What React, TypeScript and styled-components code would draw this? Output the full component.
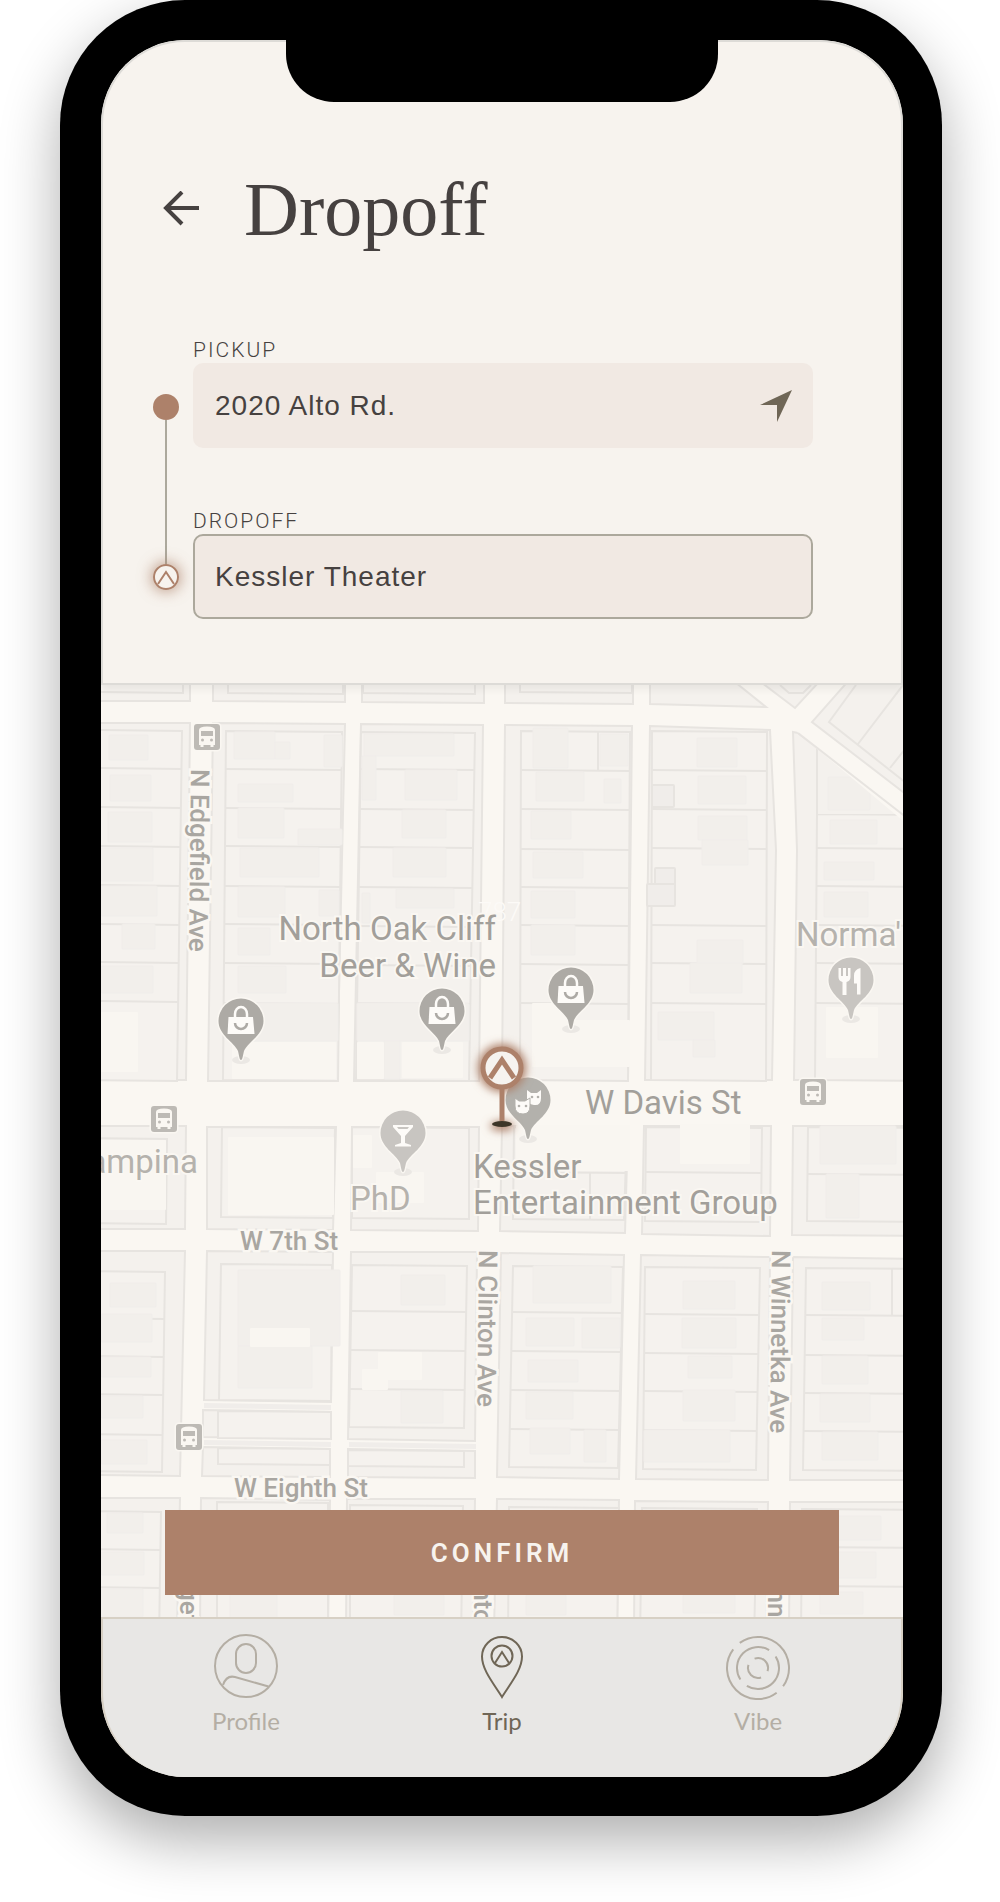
import React from "react";
import styled, { createGlobalStyle } from "styled-components";

const color = {
  clay: "#ad816a",
  ink: "#464140",
  bark: "#6f6656",
  stone: "#aca89c",
  muted: "#b4aea4",
  paper: "#f7f3ee",
  field: "#f1e9e3",
  road: "#faf7f2",
  block: "#f4f1ed",
  line: "#e7e4e0",
  building: "#f2efeb",
};

const GlobalStyle = createGlobalStyle`
  * { box-sizing: border-box; }
  body {
    margin: 0;
    background: #ffffff;
    color: ${color.ink};
    font-family: "Liberation Sans", Arial, sans-serif;
  }
  button, input { font: inherit; color: inherit; }
`;

const Stage = styled.div`
  padding: 0 58px 86px 60px;
  overflow: hidden;
`;

const Phone = styled.main`
  padding: 40px 39px 39px 41px;
  border-radius: 125px;
  background: #000000;
  box-shadow: 0 24px 60px rgba(0, 0, 0, 0.32);
`;

const Screen = styled.div`
  position: relative;
  display: flex;
  flex-direction: column;
  overflow: hidden;
  border-radius: 84px;
  background: ${color.road};
`;

const Notch = styled.div`
  position: absolute;
  top: 0;
  left: 50%;
  z-index: 3;
  width: 432px;
  height: 62px;
  margin-left: -216px;
  border-radius: 0 0 48px 48px;
  background: #000000;
`;

const Header = styled.header`
  position: relative;
  z-index: 2;
  padding: 125px 88px 64px 50px;
  border: 2px solid #dddbd7;
  border-radius: 84px 84px 0 0;
  background: ${color.paper};
  box-shadow: 0 4px 8px rgba(0, 0, 0, 0.06);
`;

const TitleRow = styled.div`
  display: flex;
  align-items: center;
  gap: 35px;
  margin-bottom: 86px;
`;

const BackButton = styled.button`
  display: flex;
  justify-content: center;
  width: 56px;
  padding: 10px;
  border: 0;
  background: none;
`;

const Title = styled.h1`
  margin: 0;
  font-family: "Liberation Serif", "Times New Roman", serif;
  font-size: 76px;
  font-weight: 400;
  line-height: 84px;
`;

const RouteForm = styled.form`
  display: grid;
  grid-template-columns: 26px 1fr;
  gap: 14px;
`;

const Rail = styled.div`
  display: flex;
  flex-direction: column;
  align-items: center;
  padding: 57px 0 29px;
`;

const Dot = styled.span`
  width: 26px;
  height: 26px;
  border-radius: 50%;
  background: ${color.clay};
`;

const RailLine = styled.span`
  flex: 1;
  width: 2px;
  background: ${color.stone};
`;

const RailEnd = styled.span`
  display: flex;
  border-radius: 50%;
  box-shadow: 0 0 14px 2px rgba(173, 129, 106, 0.7);
`;

const Fields = styled.div`
  display: flex;
  flex-direction: column;
  gap: 60px;
`;

const FieldLabel = styled.label`
  display: block;
  font-family: Roboto, sans-serif;
  font-size: 21px;
  font-weight: 300;
  line-height: 26px;
  letter-spacing: 2px;
`;

const FieldBox = styled.div<{ $active?: boolean }>`
  display: flex;
  align-items: center;
  height: 85px;
  padding: 0 19px 0 20px;
  border: 2px solid ${(p) => (p.$active ? color.stone : "transparent")};
  border-radius: 10px;
  background: ${color.field};
`;

const TextInput = styled.input`
  flex: 1;
  min-width: 0;
  padding: 0;
  border: 0;
  outline: 0;
  background: none;
  font-size: 28px;
  line-height: 36px;
  letter-spacing: 1px;
`;

const LocateButton = styled.button`
  display: flex;
  padding: 0;
  border: 0;
  background: none;
`;

const MapArea = styled.section`
  position: relative;
`;

const MapCanvas = styled.svg`
  display: block;
  width: 100%;
  height: auto;
  background: ${color.road};
`;

const PlaceText = styled.text<{ $soft?: boolean }>`
  font-family: Roboto, sans-serif;
  font-size: 33px;
  fill: ${(p) => (p.$soft ? "#b5b2ad" : "#a29f9a")};
  stroke: ${color.road};
  stroke-width: 4px;
  paint-order: stroke;
`;

const StreetText = styled.text`
  font-family: Roboto, sans-serif;
  font-size: 26px;
  font-weight: 500;
  fill: #a9a6a1;
  stroke: ${color.road};
  stroke-width: 5px;
  paint-order: stroke;
`;

const HouseNumber = styled.text`
  font-family: Roboto, sans-serif;
  font-size: 26px;
  font-weight: 300;
  fill: #fcfaf7;
`;

const ConfirmButton = styled.button`
  position: absolute;
  right: 64px;
  bottom: 22px;
  left: 64px;
  height: 85px;
  padding: 0;
  border: 0;
  background: ${color.clay};
  color: ${color.paper};
  font-family: Roboto, sans-serif;
  font-size: 26px;
  font-weight: 600;
  letter-spacing: 4px;
`;

const TabBar = styled.nav`
  display: grid;
  grid-template-columns: repeat(3, 1fr);
  padding: 15px 15px 41px;
  border: 2px solid #d7d0c4;
  border-bottom: 0;
  border-radius: 0 0 84px 84px;
  background: #e8e7e5;
`;

const Tab = styled.a<{ $current?: boolean }>`
  display: flex;
  flex-direction: column;
  align-items: center;
  gap: 8px;
  color: ${(p) => (p.$current ? color.bark : color.muted)};
  font-family: Lato, sans-serif;
  font-size: 24px;
  line-height: 30px;
  text-decoration: none;
`;

type Point = [number, number];

const pts = (list: Point[]) => list.map((p) => p.join(",")).join(" ");

// City blocks, clockwise from the top left corner of each.
const blocks: Point[][] = [
  [[90, 670], [190, 670], [190, 701], [90, 701]],
  [[213, 670], [345, 670], [345, 702], [213, 701]],
  [[362, 670], [484, 670], [484, 703], [362, 702]],
  [[505, 670], [633, 670], [633, 704], [505, 703]],
  [[650, 670], [720, 670], [766, 707], [650, 704]],
  [[745, 670], [830, 670], [795, 708]],
  [[858, 670], [920, 670], [920, 805], [812, 722]],
  [[90, 723], [190, 723], [186, 1080], [90, 1080]],
  [[213, 723], [345, 724], [337, 1081], [208, 1081]],
  [[361, 724], [483, 725], [479, 1081], [354, 1081]],
  [[505, 725], [632, 726], [628, 1080], [502, 1080]],
  [[650, 726], [770, 730], [776, 850], [772, 1080], [645, 1080]],
  [[793, 732], [798, 733], [920, 828], [920, 1080], [794, 1080], [797, 850]],
  [[90, 1126], [186, 1126], [185, 1229], [90, 1229]],
  [[207, 1127], [336, 1127], [333, 1230], [207, 1229]],
  [[352, 1127], [479, 1127], [478, 1231], [351, 1230]],
  [[502, 1126], [628, 1126], [625, 1233], [500, 1231]],
  [[644, 1126], [771, 1126], [770, 1236], [642, 1234]],
  [[793, 1126], [920, 1126], [920, 1236], [792, 1235]],
  [[90, 1251], [185, 1251], [180, 1476], [90, 1475]],
  [[207, 1251], [333, 1252], [331, 1402], [204, 1400]],
  [[203, 1410], [331, 1412], [330, 1439], [203, 1437]],
  [[203, 1447], [330, 1449], [330, 1477], [202, 1476]],
  [[351, 1252], [477, 1252], [475, 1441], [348, 1439]],
  [[348, 1449], [475, 1451], [475, 1478], [348, 1477]],
  [[501, 1253], [624, 1255], [619, 1479], [497, 1477]],
  [[641, 1255], [770, 1257], [768, 1480], [636, 1479]],
  [[793, 1257], [920, 1259], [920, 1480], [790, 1480]],
  [[90, 1498], [180, 1498], [177, 1630], [90, 1630]],
  [[201, 1498], [330, 1500], [328, 1630], [200, 1630]],
  [[347, 1499], [475, 1499], [473, 1630], [346, 1630]],
  [[497, 1499], [619, 1500], [617, 1630], [494, 1630]],
  [[635, 1501], [768, 1502], [766, 1630], [634, 1630]],
  [[790, 1502], [920, 1502], [920, 1630], [789, 1630]],
];

// Parcels: left/right at the top, left/right at the bottom, dividing heights.
type Parcel = [number, number, number, number, number[]];
const parcels: Parcel[] = [
  [90, 183, 90, 183, [660, 692]],
  [228, 343, 228, 343, [660, 693]],
  [363, 475, 363, 475, [660, 693]],
  [520, 632, 520, 632, [660, 692]],
  [90, 182, 90, 177, [730, 768, 807, 846, 885, 924, 962, 1001, 1080]],
  [226, 342, 223, 338, [731, 769, 808, 846, 886, 924, 963, 1003, 1080]],
  [361, 475, 356, 469, [732, 769, 809, 847, 887, 926, 965, 1003, 1080]],
  [521, 630, 520, 628, [731, 770, 809, 849, 887, 925, 964, 1003, 1080]],
  [652, 767, 651, 766, [731, 770, 809, 848, 925, 963, 1003, 1080]],
  [817, 920, 815, 920, [814, 848, 886, 925, 963, 1003, 1080]],
  [90, 167, 90, 166, [1138, 1223]],
  [222, 335, 221, 333, [1127, 1217]],
  [352, 469, 352, 469, [1127, 1218]],
  [514, 627, 513, 624, [1127, 1172, 1219]],
  [646, 762, 645, 761, [1127, 1172, 1221]],
  [808, 920, 807, 920, [1127, 1174, 1221]],
  [90, 165, 90, 162, [1271, 1318, 1356, 1394, 1434, 1471]],
  [221, 332, 219, 331, [1264, 1400]],
  [218, 331, 218, 331, [1411, 1438]],
  [218, 330, 218, 330, [1448, 1464]],
  [352, 467, 349, 464, [1265, 1311, 1350, 1389, 1427]],
  [348, 464, 348, 464, [1450, 1466]],
  [513, 623, 509, 618, [1266, 1312, 1351, 1390, 1429, 1467]],
  [645, 760, 643, 756, [1267, 1314, 1353, 1391, 1430, 1469]],
  [806, 920, 803, 920, [1268, 1315, 1355, 1393, 1431, 1470]],
  [90, 161, 90, 159, [1511, 1549, 1587, 1640]],
  [217, 328, 217, 328, [1502, 1640]],
  [350, 463, 350, 461, [1505, 1640]],
  [509, 619, 508, 617, [1507, 1640]],
  [642, 757, 640, 754, [1508, 1640]],
  [802, 920, 801, 920, [1509, 1547, 1586, 1640]],
];

type Box = [number, number, number, number];
const buildings: Box[] = [
  [109, 735, 39, 25], [110, 775, 41, 26], [108, 812, 44, 30], [101, 848, 52, 33],
  [101, 886, 56, 30], [122, 924, 33, 25], [101, 966, 52, 27],
  [234, 732, 41, 27], [275, 742, 15, 17], [324, 735, 18, 32], [238, 784, 55, 18],
  [238, 808, 46, 30], [298, 829, 44, 16], [240, 848, 79, 29], [238, 887, 47, 30],
  [319, 890, 20, 26], [238, 928, 32, 27], [238, 966, 48, 27],
  [364, 734, 90, 22], [362, 756, 14, 44], [405, 770, 52, 30], [402, 810, 44, 28],
  [393, 848, 53, 29], [396, 889, 58, 19], [362, 893, 8, 30],
  [533, 728, 35, 40], [600, 734, 28, 32], [536, 772, 48, 29], [604, 779, 17, 24],
  [531, 811, 40, 28], [533, 852, 50, 26], [531, 891, 44, 27], [531, 925, 44, 30],
  [697, 738, 40, 29], [698, 776, 48, 28], [698, 816, 49, 24], [702, 840, 46, 25],
  [697, 940, 46, 24], [690, 963, 52, 30], [658, 1012, 56, 28], [693, 1040, 22, 17],
  [828, 777, 42, 33], [830, 820, 47, 24], [824, 862, 50, 18], [824, 892, 44, 25],
  [230, 1003, 108, 38], [357, 1003, 112, 38], [384, 1041, 16, 38],
  [820, 1126, 76, 38], [826, 1174, 33, 44],
  [110, 1283, 46, 24], [101, 1314, 51, 28], [101, 1357, 50, 20], [101, 1396, 42, 22],
  [101, 1440, 46, 24], [238, 1270, 102, 76], [238, 1346, 74, 42],
  [401, 1275, 44, 30], [401, 1391, 42, 32], [533, 1266, 78, 37], [526, 1318, 48, 28],
  [582, 1318, 38, 30], [528, 1360, 50, 22], [526, 1392, 47, 27], [530, 1428, 40, 26],
  [584, 1430, 22, 32], [683, 1281, 52, 28], [682, 1318, 54, 30], [688, 1356, 44, 22],
  [683, 1390, 52, 31], [644, 1430, 86, 32], [822, 1282, 48, 28], [822, 1318, 42, 22],
  [822, 1356, 46, 28], [820, 1394, 50, 28], [822, 1432, 56, 28],
  [107, 1513, 36, 20], [101, 1552, 43, 23], [101, 1589, 42, 28], [230, 1595, 47, 30],
  [394, 1595, 50, 20], [526, 1595, 40, 20], [683, 1595, 52, 18], [838, 1516, 43, 24],
  [838, 1552, 38, 26], [820, 1592, 43, 22],
];

const sheds: Box[] = [[652, 785, 22, 22], [655, 868, 20, 18], [647, 884, 28, 22]];

const lots: Box[] = [
  [90, 1012, 48, 60], [232, 1042, 104, 37], [357, 1042, 27, 37], [402, 1042, 61, 36],
  [532, 1003, 34, 20], [532, 1020, 98, 47], [826, 1007, 52, 51], [90, 1140, 76, 70],
  [228, 1137, 106, 78], [353, 1135, 19, 33], [376, 1172, 48, 31], [516, 1125, 114, 46],
  [680, 1124, 70, 40], [378, 1352, 44, 28], [362, 1369, 26, 21], [250, 1328, 60, 19],
];

const ParcelShape = ({ parcel }: { parcel: Parcel }) => {
  const [leftTop, rightTop, leftEnd, rightEnd, rows] = parcel;
  const top = rows[0];
  const end = rows[rows.length - 1];
  const at = (a: number, b: number, y: number) => a + ((b - a) * (y - top)) / (end - top);
  return (
    <g>
      <polygon points={pts([[leftTop, top], [rightTop, top + 1], [rightEnd, end + 1], [leftEnd, end]])} />
      {rows.slice(1, -1).map((y) => (
        <line key={y} x1={at(leftTop, leftEnd, y)} x2={at(rightTop, rightEnd, y)} y1={y} y2={y + 1} />
      ))}
    </g>
  );
};

const Boxes = ({ list }: { list: Box[] }) => (
  <>
    {list.map(([x, y, w, h], i) => (
      <rect key={i} x={x} y={y} width={w} height={h} rx={1} />
    ))}
  </>
);

type PinKind = "shop" | "food" | "bar" | "theater";

// Teardrop marker whose origin is its tip.
const Pin = ({ x, y, kind, fill }: { x: number; y: number; kind: PinKind; fill: string }) => (
  <g transform={`translate(${x} ${y})`}>
    <ellipse rx="9" ry="4" fill="#ebe8e4" />
    <path
      d="M0 0C-1.500 0-2-5-3-9C-7-18-22.500-25-22.500-39A22.500 22.500 0 0 1 22.500-39C22.500-25 7-18 3-9C2-5 1.500 0 0 0Z"
      fill={fill}
      stroke={color.road}
      strokeWidth="3"
      paintOrder="stroke"
    />
    {kind === "shop" && (
      <g>
        <path d="M-12.500-43H12L13.500-26H-13.500Z" fill="#fdfbf8" />
        <path d="M-6-42V-46a6 7 0 0 1 12 0V-42" fill="none" stroke="#fdfbf8" strokeWidth="2.500" />
        <path d="M-6-37a6 6 0 0 0 12 0" fill="none" stroke={fill} strokeWidth="2.500" />
      </g>
    )}
    {kind === "food" && (
      <g fill="#fdfbf8">
        <path d="M-12.500-51h2.500v8h2v-8h3v8h2v-8h2.500v9q0 4-4 5v13h-4v-13q-4-1-4-5Z" />
        <path d="M9.500-51v26.500h-3.500v-11h-3v-8q0-6 6.500-7.500Z" />
      </g>
    )}
    {kind === "bar" && (
      <path d="M-10-47H10V-45L2-36V-29L8-27V-25.500H-8V-27L-2-29V-36L-10-45ZM-6-45L-4.500-43H4.500L6-45Z" fill="#fdfbf8" fillRule="evenodd" />
    )}
    {kind === "theater" && (
      <g>
        <path d="M-1-49L3-46H9L13-49V-41q0 8-7 7q-7-1-7-7Z" fill="#fdfbf8" />
        <path d="M-13-41L-9-38H-3L2-41V-33q0 8-7 8q-8 0-8-8Z" fill="#fdfbf8" stroke={fill} strokeWidth="1" />
        <g fill={fill}>
          <circle cx="-9" cy="-33" r="1.300" />
          <circle cx="-2" cy="-33" r="1.300" />
          <circle cx="4" cy="-42" r="1.300" />
          <circle cx="10" cy="-42" r="1.300" />
        </g>
      </g>
    )}
  </g>
);

const BusStop = ({ x, y }: { x: number; y: number }) => (
  <g transform={`translate(${x} ${y})`}>
    <rect width="26" height="26" rx="3" fill="#bdbab5" stroke={color.road} strokeWidth="3" paintOrder="stroke" />
    <path d="M5 6q0-3.500 8-3.500t8 3.500v15h-1.500v2h-3v-2h-7v2h-3v-2H5Z" fill={color.road} />
    <rect x="7" y="7" width="12" height="5" fill="#bdbab5" />
    <circle cx="8.500" cy="16" r="1.500" fill="#bdbab5" />
    <circle cx="17.500" cy="16" r="1.500" fill="#bdbab5" />
  </g>
);

const StreetMap = () => (
  <MapCanvas viewBox="101 685 802 932" role="img" aria-label="Map around the Kessler Theater">
    <defs>
      <filter id="glow" x="-60%" y="-60%" width="220%" height="220%">
        <feGaussianBlur stdDeviation="4" />
      </filter>
    </defs>
    <g fill={color.block} stroke={color.line} strokeWidth="2">
      {blocks.map((b, i) => (
        <polygon key={i} points={pts(b)} />
      ))}
    </g>
    <g fill="#f0edea">
      <path d="M204 1403L331 1405V1410L204 1408ZM204 1440L331 1442V1447L204 1445ZM349 1442L476 1444V1449L349 1447Z" />
    </g>
    <g fill="#f5f2ee" stroke={color.line} strokeWidth="2">
      {parcels.map((p, i) => (
        <ParcelShape key={i} parcel={p} />
      ))}
    </g>
    <g fill="none" stroke={color.line} strokeWidth="2">
      <path d="M780 685L789 693H803L811 685M856 685L829 722L920 794M903 685L858 744M890 768L920 730" />
      <path d="M590 1172V1219M598 731V770M892 1268V1315" />
    </g>
    <path d="M816 748L920 828V814H816Z" fill={color.block} />
    <path d="M817 815V748" stroke={color.line} strokeWidth="2" />
    <g fill={color.building} stroke="#f0edea" strokeWidth="1">
      <Boxes list={buildings} />
    </g>
    <g fill="#f0edea" stroke={color.line} strokeWidth="2">
      <Boxes list={sheds} />
    </g>
    <g fill="#f9f6f1">
      <Boxes list={lots} />
    </g>
    <path d="M793 720L815 732L920 812V835L798 733Z" fill={color.road} />
    <path d="M798 733L920 828" stroke={color.line} strokeWidth="2" />

    <BusStop x={194} y={724} />
    <BusStop x={151} y={1106} />
    <BusStop x={800} y={1079} />
    <BusStop x={176} y={1424} />

    <HouseNumber x="478" y="921">787</HouseNumber>

    <StreetText transform="translate(191 769) rotate(90.600)">N Edgefield Ave</StreetText>
    <StreetText transform="translate(479 1250) rotate(90.600)">N Clinton Ave</StreetText>
    <StreetText transform="translate(772 1250) rotate(90.600)">N Winnetka Ave</StreetText>
    <StreetText transform="translate(180 1532) rotate(90)">N Edgefield Ave</StreetText>
    <StreetText transform="translate(474 1531) rotate(90)">N Clinton Ave</StreetText>
    <StreetText transform="translate(768 1534) rotate(90)">N Winnetka Ave</StreetText>
    <StreetText x="240" y="1250">W 7th St</StreetText>
    <StreetText x="234" y="1497">W Eighth St</StreetText>

    <Pin x={241} y={1060} kind="shop" fill="#adaaa5" />
    <Pin x={442} y={1050} kind="shop" fill="#adaaa5" />
    <Pin x={571} y={1029} kind="shop" fill="#adaaa5" />
    <Pin x={851} y={1019} kind="food" fill="#c8c5c1" />
    <Pin x={403} y={1172} kind="bar" fill="#c8c5c1" />
    <Pin x={528} y={1139} kind="theater" fill="#b3b1ac" />

    <PlaceText x="496" y="940" textAnchor="end">North Oak Cliff</PlaceText>
    <PlaceText x="496" y="977" textAnchor="end">Beer &amp; Wine</PlaceText>
    <PlaceText x="796" y="946" $soft>Norma'</PlaceText>
    <PlaceText x="198" y="1173" textAnchor="end" $soft>ampina</PlaceText>
    <PlaceText x="350" y="1210" $soft>PhD</PlaceText>
    <PlaceText x="585" y="1114">W Davis St</PlaceText>
    <PlaceText x="473" y="1178">Kessler</PlaceText>
    <PlaceText x="473" y="1214">Entertainment Group</PlaceText>

    <g filter="url(#glow)" fill={color.clay}>
      <circle cx="502" cy="1068" r="24" />
      <ellipse cx="502" cy="1126" rx="12" ry="5" />
    </g>
    <ellipse cx="502" cy="1124" rx="10" ry="3" fill="#3d3628" />
    <path d="M502 1088V1121" stroke={color.clay} strokeWidth="5" />
    <circle cx="502" cy="1068" r="19" fill="#f6f3ef" stroke={color.clay} strokeWidth="5" />
    <path d="M490 1078L502 1060L514 1078" fill="none" stroke={color.clay} strokeWidth="5" />
  </MapCanvas>
);

const arc = (cx: number, cy: number, r: number, from: number, to: number) => {
  const at = (deg: number) => {
    const a = (deg * Math.PI) / 180;
    return `${cx + r * Math.cos(a)} ${cy + r * Math.sin(a)}`;
  };
  return `M${at(from)}A${r} ${r} 0 ${to - from > 180 ? 1 : 0} 1 ${at(to)}`;
};

const vibeArcs = [
  [31, -126, 36], [31, 53, 217],
  [21, 147, 302], [21, -33, 122],
  [10, -110, 18], [10, 72, 198],
].map(([r, from, to]) => arc(32, 34, r, from, to)).join("");

const TabIcon = ({ children }: { children: React.ReactNode }) => (
  <svg width="64" height="64" viewBox="0 0 64 64" fill="none" stroke="currentColor" strokeWidth="2" overflow="visible" aria-hidden="true">
    {children}
  </svg>
);

export default function App() {
  return (
    <>
      <GlobalStyle />
      <Stage>
        <Phone>
          <Screen>
            <Notch />
            <Header>
              <TitleRow>
                <BackButton type="button" aria-label="Back">
                  <svg width="36" height="36" viewBox="0 0 36 36" fill="none" stroke={color.ink} strokeWidth="4">
                    <path d="M36 17H4M19 1L3 17L19 33" />
                  </svg>
                </BackButton>
                <Title>Dropoff</Title>
              </TitleRow>
              <RouteForm onSubmit={(e) => e.preventDefault()}>
                <Rail>
                  <Dot />
                  <RailLine />
                  <RailEnd>
                    <svg width="26" height="26" viewBox="0 0 26 26" stroke={color.clay} strokeWidth="2" aria-hidden="true">
                      <circle cx="13" cy="13" r="12" fill={color.paper} />
                      <path d="M5 20L13 8L21 20" fill="none" />
                    </svg>
                  </RailEnd>
                </Rail>
                <Fields>
                  <div>
                    <FieldLabel htmlFor="pickup">PICKUP</FieldLabel>
                    <FieldBox>
                      <TextInput id="pickup" type="text" defaultValue="2020 Alto Rd." />
                      <LocateButton type="button" aria-label="Use current location">
                        <svg width="32" height="32" viewBox="0 0 32 32">
                          <path d="M32 0L0 15H17V32Z" fill={color.bark} />
                        </svg>
                      </LocateButton>
                    </FieldBox>
                  </div>
                  <div>
                    <FieldLabel htmlFor="dropoff">DROPOFF</FieldLabel>
                    <FieldBox $active>
                      <TextInput id="dropoff" type="text" defaultValue="Kessler Theater" />
                    </FieldBox>
                  </div>
                </Fields>
              </RouteForm>
            </Header>
            <MapArea>
              <StreetMap />
              <ConfirmButton type="button">CONFIRM</ConfirmButton>
            </MapArea>
            <TabBar>
              <Tab href="#profile">
                <TabIcon>
                  <circle cx="32" cy="32" r="31" />
                  <rect x="22" y="10" width="20" height="29" rx="10" />
                  <path d="M9 51C11 45 15 41.500 21 43L54.500 52.500" />
                </TabIcon>
                Profile
              </Tab>
              <Tab href="#trip" $current aria-current="page">
                <TabIcon>
                  <path d="M32 63C24 50 12 36 12 22.500A20 19.500 0 0 1 52 22.500C52 36 40 50 32 63Z" />
                  <circle cx="32" cy="22" r="10.500" />
                  <path d="M25 29L32 18L39 29" />
                </TabIcon>
                Trip
              </Tab>
              <Tab href="#vibe">
                <TabIcon>
                  <path d={vibeArcs} />
                </TabIcon>
                Vibe
              </Tab>
            </TabBar>
          </Screen>
        </Phone>
      </Stage>
    </>
  );
}
